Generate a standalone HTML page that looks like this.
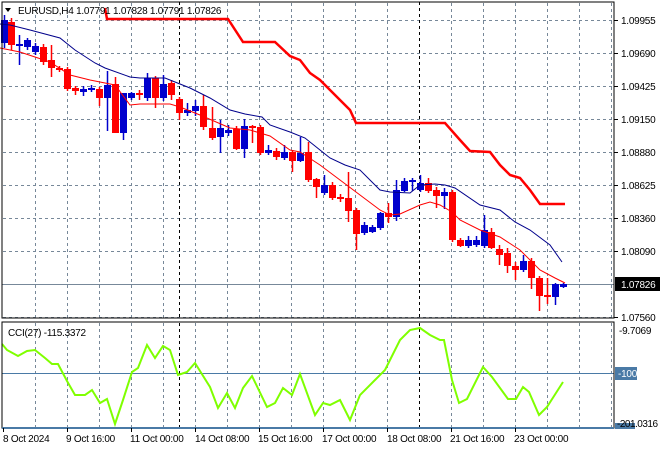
<!DOCTYPE html>
<html><head><meta charset="utf-8"><style>
html,body{margin:0;padding:0;background:#fff;width:660px;height:450px;overflow:hidden}
svg text{font-family:"Liberation Sans",sans-serif;font-size:10px;letter-spacing:-0.25px;fill:#000}
</style></head><body>
<svg id="s" width="660" height="450" xmlns="http://www.w3.org/2000/svg">
<rect width="660" height="450" fill="#fff"/>
<g id="grid" stroke="#778899" stroke-width="1" stroke-dasharray="3,3"></g>
<line x1="2" y1="284.5" x2="614" y2="284.5" stroke="#778899"/>
<line x1="2" y1="373.5" x2="614" y2="373.5" stroke="#4a7aa6"/>
<line x1="179.5" y1="2" x2="179.5" y2="318" stroke="#000" stroke-dasharray="3,3"/>
<line x1="419.5" y1="2" x2="419.5" y2="318" stroke="#000" stroke-dasharray="3,3"/>
<line x1="179.5" y1="323" x2="179.5" y2="427" stroke="#000" stroke-dasharray="3,3"/>
<line x1="419.5" y1="323" x2="419.5" y2="427" stroke="#000" stroke-dasharray="3,3"/>
<polyline fill="none" stroke="#f00" stroke-width="2.5" points="105,8 107,19 228,19 243,42 275,42 290,56 300,60 310,73 320,80 330,90 340,100 350,110 356,123 445,123 460,140 470,151 490,152 500,165 510,175 520,178 530,190 540,204 565,204"/>
<g id="candles"></g>
<polyline fill="none" stroke="#00008b" stroke-width="1" points="0,24 10,25 30,30 60,38 75,50 95,63 105,68 130,77 140,78 165,78 175,82 190,88 210,98 230,110 245,114 262,117 270,125 290,132 305,138 320,150 330,158 345,165 360,170 380,190 390,192 410,193 420,185 435,184 445,185 455,188 480,205 500,210 515,222 530,230 550,245 562,262"/>
<polyline fill="none" stroke="#f00" stroke-width="1" points="0,48 20,52 50,62 70,75 90,80 100,82 115,85 130,105 140,104 170,104 180,107 200,115 230,128 250,130 270,136 290,150 300,152 320,165 340,180 360,195 380,210 390,215 400,214 420,205 430,202 440,205 452,212 460,220 480,230 500,237 520,250 540,270 555,278 565,283"/>
<polyline fill="none" stroke="#7fff00" stroke-width="2" points="2,344 7,350 18,356 27,351 35,350 45,358 52,364 58,364 67,381 75,395 85,395 92,390 100,403 107,399 115,424 123,400 132,372 138,368 147,345 155,358 163,346 170,350 178,375 187,372 195,363 210,387 218,408 227,393 235,408 243,388 252,376 267,407 275,403 283,388 292,395 300,374 315,415 323,403 330,405 340,400 350,420 360,395 375,380 385,370 400,340 410,330 420,328 430,335 440,340 444,340 452,380 459,403 467,399 483,367 492,377 508,399 516,399 523,387 529,392 539,415 547,407 563,382"/>
<rect x="2" y="2" width="612" height="316" fill="none" stroke="#000"/>
<rect x="2" y="322" width="612" height="106" fill="none" stroke="#000"/>
<line x1="2" y1="428" x2="614" y2="428" stroke="#4a7aa6" stroke-width="2"/>
<g id="ticks" stroke="#000"></g>
<path d="M5,8 L11,8 L8,12 Z" fill="#000"/>
<text x="18" y="14">EURUSD,H4  1.07791 1.07828 1.07791 1.07826</text>
<text x="8" y="336">CCI(27) -115.3372</text>
<text x="621" y="24">1.09955</text>
<text x="621" y="57">1.09690</text>
<text x="621" y="90">1.09425</text>
<text x="621" y="123">1.09150</text>
<text x="621" y="156">1.08880</text>
<text x="621" y="189">1.08625</text>
<text x="621" y="222">1.08360</text>
<text x="621" y="255">1.08090</text>
<rect x="615" y="277" width="45" height="14" fill="#000"/>
<text x="621" y="288" style="fill:#fff">1.07826</text>
<text x="621" y="321">1.07560</text>
<text x="619" y="334">-9.7069</text>
<rect x="615" y="367" width="22" height="13" fill="#4a7aa6"/>
<text x="618" y="377" style="fill:#fff">-100</text>
<rect x="615" y="423" width="20" height="6" fill="#4a7aa6"/>
<text x="617" y="427" style="letter-spacing:-0.5px">-201.0316</text>
<text x="3" y="442">8 Oct 2024</text>
<text x="66" y="442">9 Oct 16:00</text>
<text x="130" y="442">11 Oct 00:00</text>
<text x="195" y="442">14 Oct 08:00</text>
<text x="258" y="442">15 Oct 16:00</text>
<text x="322" y="442">17 Oct 00:00</text>
<text x="387" y="442">18 Oct 08:00</text>
<text x="450" y="442">21 Oct 16:00</text>
<text x="514" y="442">23 Oct 00:00</text>
</svg>
<script>
var NS="http://www.w3.org/2000/svg";
function el(p,t,a){var e=document.createElementNS(NS,t);for(var k in a)e.setAttribute(k,a[k]);p.appendChild(e);return e;}
var g=document.getElementById('grid');
for(var x=35;x<614;x+=32){if(x==179||x==419)continue;el(g,'line',{x1:x+.5,y1:3,x2:x+.5,y2:318});el(g,'line',{x1:x+.5,y1:323,x2:x+.5,y2:427});}
[20,53,86,119,152,185,218,251,317].forEach(function(y){el(g,'line',{x1:3,y1:y+.5,x2:614,y2:y+.5});});
var t=document.getElementById('ticks');
[20,53,86,119,152,185,218,251,317].forEach(function(y){el(t,'line',{x1:614,y1:y+.5,x2:618,y2:y+.5});});
[3,67,131,195,259,323,387,451,515].forEach(function(x){el(t,'line',{x1:x+.5,y1:428,x2:x+.5,y2:432});});
var C=[[4,43,20,15,48],[11,22,45,18,50],[19,45,44,35,65],[27,47,40,38,50],[35,52,46,43,55],[43,47,62,44,65],[51,60,68,45,77],[59,68,70,66,72],[67,69,89,67,91],[75,88,91,86,95],[83,92,89,86,96],[91,89,88,85,92],[99,89,98,87,106],[107,98,85,71,131],[115,84,133,77,133],[123,133,93,93,140],[131,98,93,92,100],[139,93,95,90,100],[147,98,78,73,101],[155,78,98,76,108],[163,98,84,75,101],[171,83,95,80,100],[179,99,113,97,120],[187,113,110,103,116],[195,111,106,100,116],[203,106,127,95,130],[212,128,138,107,140],[220,137,128,120,153],[228,133,130,125,136],[236,129,149,126,150],[244,149,126,119,158],[252,126,127,125,143],[260,127,153,125,155],[268,153,150,145,155],[276,151,157,148,160],[284,158,152,145,160],[292,152,161,150,172],[300,161,153,137,162],[308,152,180,142,182],[316,179,187,178,198],[324,193,185,175,195],[332,185,198,182,200],[340,197,199,194,202],[348,198,211,172,222],[356,210,234,208,250],[364,233,225,222,235],[372,232,227,225,233],[380,228,213,212,230],[388,213,217,203,223],[396,217,190,180,221],[404,191,181,178,192],[412,181,180,178,191],[420,190,183,175,192],[428,183,191,178,193],[436,190,196,187,208],[444,196,192,188,209],[452,192,240,190,242],[460,240,246,238,247],[468,246,240,236,248],[476,245,240,236,247],[484,246,230,215,248],[491,232,248,228,249],[499,249,255,245,265],[507,253,266,248,273],[515,266,270,262,280],[523,270,261,255,272],[531,261,278,258,289],[539,278,296,276,311],[547,295,297,278,304],[555,297,284,283,305],[563,287,284,283,288]];
var cg=document.getElementById('candles');
C.forEach(function(c){var up=c[2]<c[1];var col=up?'#0000cd':'#f00';
el(cg,'line',{x1:c[0]+.5,y1:c[3],x2:c[0]+.5,y2:c[4],stroke:col,'stroke-width':1.5});
var top=Math.min(c[1],c[2]),h=Math.max(2,Math.abs(c[1]-c[2]));
el(cg,'rect',{x:c[0]-3,y:top,width:7,height:h,fill:col});});
</script>
</body></html>
